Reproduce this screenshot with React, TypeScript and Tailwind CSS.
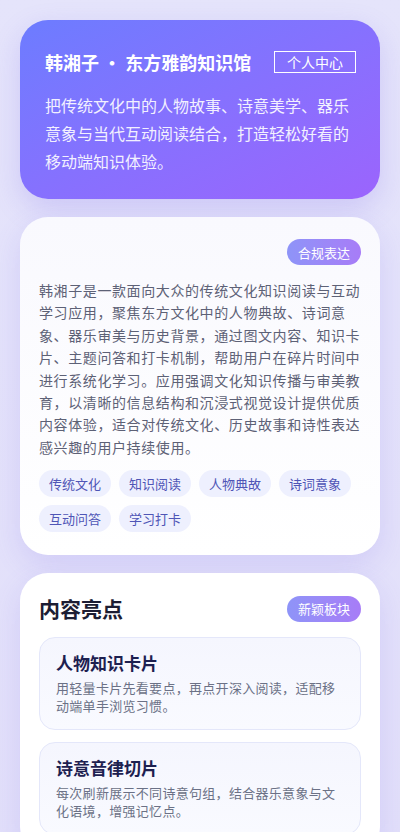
import React from "react";

const font = { fontFamily: '"Noto Sans CJK SC", "Noto Sans", sans-serif' };

const tags = ["传统文化", "知识阅读", "人物典故", "诗词意象", "互动问答", "学习打卡"];

const highlights = [
  {
    title: "人物知识卡片",
    desc: "用轻量卡片先看要点，再点开深入阅读，适配移动端单手浏览习惯。",
  },
  {
    title: "诗意音律切片",
    desc: "每次刷新展示不同诗意句组，结合器乐意象与文化语境，增强记忆点。",
  },
];

function Badge({ children }: { children: React.ReactNode }) {
  return (
    <span className="inline-flex h-[26px] items-center rounded-full bg-gradient-to-r from-[#8e94f8] to-[#a77cf7] px-[11px] text-[13px] leading-none text-white">
      {children}
    </span>
  );
}

export default function App() {
  return (
    <div
      style={font}
      className="min-h-[832px] w-full bg-gradient-to-b from-[#e5e4fb] to-[#e2dffa] px-5 pt-5 pb-10"
    >
      <div className="flex flex-col gap-[18px]">
        {/* Hero */}
        <section className="rounded-[28px] bg-gradient-to-br from-[#6c7cff] to-[#9b64fd] pl-[25px] pr-6 py-6 shadow-[0_10px_28px_rgba(120,100,230,0.22)]">
          <div className="flex h-9 items-center justify-between">
            <h1 className="text-[18px] font-bold leading-none text-white">韩湘子 · 东方雅韵知识馆</h1>
            <span className="flex h-[22px] items-center border border-white px-[12px] text-[14px] leading-none text-white">
              个人中心
            </span>
          </div>
          <p className="mt-[11px] text-[16px] leading-7 text-[#f2f0ff]">
            把传统文化中的人物故事、诗意美学、器乐意象与当代互动阅读结合，打造轻松好看的移动端知识体验。
          </p>
        </section>

        {/* Intro card */}
        <section className="rounded-[28px] bg-gradient-to-b from-[#f9f9fe] to-white px-[19px] pt-[22px] pb-[23px] shadow-[0_10px_28px_rgba(120,100,230,0.16)]">
          <div className="flex justify-end">
            <Badge>合规表达</Badge>
          </div>
          <p className="mt-[14px] text-[14px] leading-[22.4px] tracking-[0.6px] text-[#5d6176]">
            韩湘子是一款面向大众的传统文化知识阅读与互动学习应用，聚焦东方文化中的人物典故、诗词意象、器乐审美与历史背景，通过图文内容、知识卡片、主题问答和打卡机制，帮助用户在碎片时间中进行系统化学习。应用强调文化知识传播与审美教育，以清晰的信息结构和沉浸式视觉设计提供优质内容体验，适合对传统文化、历史故事和诗性表达感兴趣的用户持续使用。
          </p>
          <div className="mt-3 flex flex-wrap gap-2">
            {tags.map((t) => (
              <span
                key={t}
                className="flex h-[27px] items-center rounded-full bg-[#eef0fe] px-[10px] text-[13px] leading-none text-[#4f55b6]"
              >
                {t}
              </span>
            ))}
          </div>
        </section>

        {/* Highlights */}
        <section className="rounded-[28px] bg-white px-[19px] pt-[22px] pb-5 shadow-[0_10px_28px_rgba(120,100,230,0.16)]">
          <div className="flex h-[27px] items-center justify-between">
            <h2 className="text-[21px] font-bold leading-none text-[#1c1d33]">内容亮点</h2>
            <Badge>新颖板块</Badge>
          </div>
          <div className="mt-[15px] flex flex-col gap-3">
            {highlights.map((h) => (
              <div
                key={h.title}
                className="rounded-2xl border border-[#e4e7fa] bg-gradient-to-b from-[#f5f6fe] to-[#f9faff] px-4 pt-[13px] pb-[14px]"
              >
                <h3 className="text-[17px] font-bold leading-6 text-[#1d2050]">{h.title}</h3>
                <p className="mt-1 text-[13px] leading-[18px] tracking-[0.3px] text-[#6b7186]">{h.desc}</p>
              </div>
            ))}
          </div>
        </section>
      </div>
    </div>
  );
}
